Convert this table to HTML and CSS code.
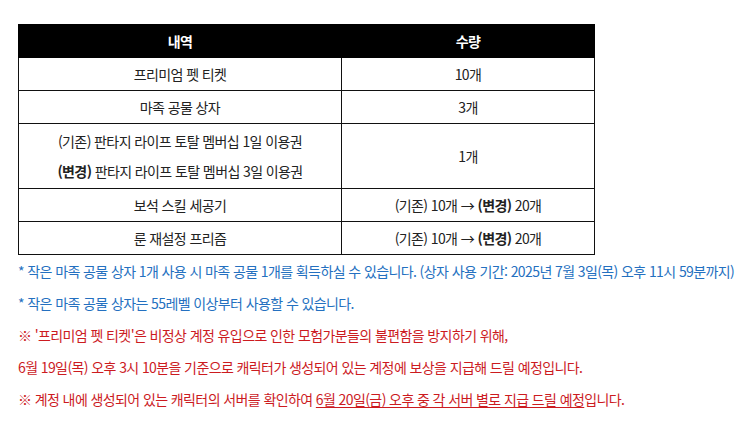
FILE: index.html
```html
<!DOCTYPE html>
<html lang="ko">
<head>
<meta charset="utf-8">
<link rel="stylesheet" href="styles.css">
</head>
<body>
<div class="page">
  <table class="rewards">
    <thead>
      <tr><th class="col-item">내역</th><th class="col-qty">수량</th></tr>
    </thead>
    <tbody>
      <tr><td>프리미엄 펫 티켓</td><td>10개</td></tr>
      <tr><td>마족 공물 상자</td><td>3개</td></tr>
      <tr class="tall"><td><div class="line">(기존) 판타지 라이프 토탈 멤버십 1일 이용권</div><div class="line"><b>(변경)</b> 판타지 라이프 토탈 멤버십 3일 이용권</div></td><td>1개</td></tr>
      <tr><td>보석 스킬 세공기</td><td>(기존) 10개 → <b>(변경)</b> 20개</td></tr>
      <tr><td>룬 재설정 프리즘</td><td>(기존) 10개 → <b>(변경)</b> 20개</td></tr>
    </tbody>
  </table>
  <div class="notes">
    <p class="note blue">* 작은 마족 공물 상자 1개 사용 시 마족 공물 1개를 획득하실 수 있습니다. (상자 사용 기간: 2025년 7월 3일(목) 오후 11시 59분까지)</p>
    <p class="note blue">* 작은 마족 공물 상자는 55레벨 이상부터 사용할 수 있습니다.</p>
    <p class="note red">※ '프리미엄 펫 티켓'은 비정상 계정 유입으로 인한 모험가분들의 불편함을 방지하기 위해,</p>
    <p class="note red">6월 19일(목) 오후 3시 10분을 기준으로 캐릭터가 생성되어 있는 계정에 보상을 지급해 드릴 예정입니다.</p>
    <p class="note red">※ 계정 내에 생성되어 있는 캐릭터의 서버를 확인하여 <u>6월 20일(금) 오후 중 각 서버 별로 지급 드릴 예정</u>입니다.</p>
  </div>
</div>
</body>
</html>
```
FILE: styles.css
```css
html, body {
  margin: 0;
  padding: 0;
  background: #ffffff;
}
body {
  font-family: "Noto Sans CJK KR", "Noto Sans", sans-serif;
  font-size: 14px;
  color: #222222;
  letter-spacing: -0.6px;
}
.page {
  padding: 24px 0 0 18px;
}
.rewards {
  border-collapse: collapse;
  width: 577px;
  table-layout: fixed;
}
.rewards th, .rewards td {
  border: 1px solid #111111;
  text-align: center;
  padding: 0;
  height: 32px;
  font-weight: 400;
  line-height: 30px;
}
.rewards th {
  background: #000000;
  color: #ffffff;
  font-weight: 700;
  border-color: #000000;
}
.col-item { width: 322px; }
.rewards b { font-weight: 700; }
.rewards .tall td { height: 64px; }
.line { line-height: 30px; }
.note {
  margin: 0;
  line-height: 32px;
}
.blue { color: #2470c0; }
.red { color: #cc1b1f; }
.note u {
  text-decoration: underline;
  text-underline-offset: 2px;
}
```
